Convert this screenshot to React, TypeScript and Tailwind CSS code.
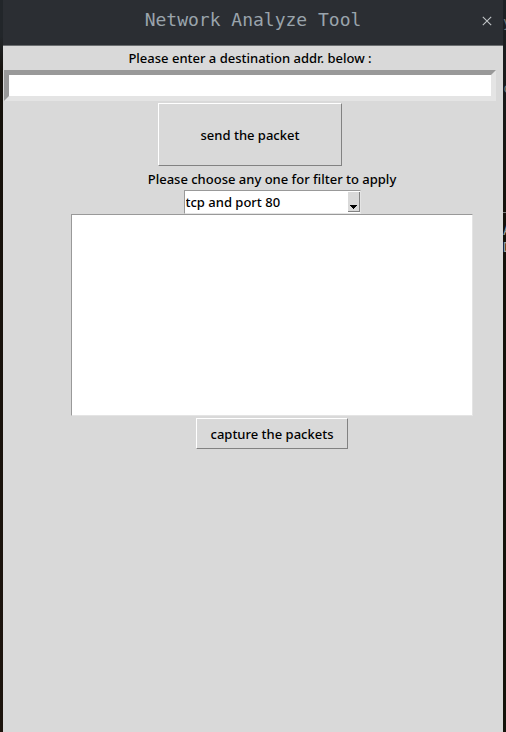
import { useState } from "react";

const filters = ["tcp and port 80", "tcp and port 443", "udp and port 53", "icmp"];

function TitleBar() {
  return (
    <header className="relative flex h-[46px] items-center justify-center border-b border-[#6b6e70] bg-[#2b2e33] pb-[6px]">
      <h1 className="font-['DejaVu_Sans_Mono','Liberation_Mono',monospace] text-[18px] leading-6 text-[#9aa4ac]">
        Network Analyze Tool
      </h1>
      <button type="button" aria-label="Close" className="absolute right-[10px] top-[15px] p-px text-[#c0c4c7]">
        <svg width="10" height="10" viewBox="0 0 10 10" fill="none" stroke="currentColor" strokeWidth="1.1">
          <path d="M0.8 0.8 9.2 9.2M9.2 0.8 0.8 9.2" />
        </svg>
      </button>
    </header>
  );
}

function DesktopEdge() {
  return (
    <div
      aria-hidden="true"
      className="relative w-[3px] shrink-0 overflow-hidden bg-gradient-to-b from-[#1d2125] via-[#15110b] via-30% to-[#15130b] font-['DejaVu_Sans_Mono',monospace] text-[14px] leading-4 text-[#777777]"
    >
      <span className="absolute left-0 top-[14px]">y</span>
      <span className="absolute left-0 top-[80px]">c</span>
      <span className="absolute left-0 top-[212px] h-px w-[3px] bg-[#777777]" />
      <span className="absolute left-0 top-[222px] text-[#a0a0a0]">A</span>
      <span className="absolute left-0 top-[239px] text-[#a0a0a0]">D</span>
    </div>
  );
}

export default function App() {
  const [address, setAddress] = useState("");
  const [filter, setFilter] = useState(filters[0]);
  const [output, setOutput] = useState("");

  return (
    <div className="flex min-h-screen bg-[#15110b] font-['Noto_Sans','Open_Sans',sans-serif] text-[13px] font-medium leading-5 text-black">
      <div className="w-[3px] shrink-0 bg-gradient-to-b from-[#22262a] from-5% via-[#15110b] via-10% to-[#1d140d]" />
      <main className="min-w-0 flex-1 bg-[#d9d9d9]">
        <TitleBar />
        <section className="flex flex-col items-center pl-px pr-[7px] pt-[2px]">
          <label htmlFor="address">Please enter a destination addr. below :</label>
          <input
            id="address"
            type="text"
            value={address}
            onChange={(e) => setAddress(e.target.value)}
            className="mt-[2px] h-[31px] w-full border-[5px] border-b-[#e4e4e4] border-l-[#999999] border-r-[#e4e4e4] border-t-[#999999] bg-white px-1 outline-none"
          />
          <button
            type="button"
            className="mt-[2px] h-[63px] w-[184px] border border-b-[#828282] border-l-white border-r-[#828282] border-t-white"
          >
            send the packet
          </button>
        </section>
        <section className="flex flex-col items-center pb-4 pl-[68px] pr-[30px] pt-[3px]">
          <label htmlFor="filter">Please choose any one for filter to apply</label>
          <div className="relative mt-px h-6 w-[177px]">
            <select
              id="filter"
              value={filter}
              onChange={(e) => setFilter(e.target.value)}
              className="h-full w-full appearance-none border border-b-[#e4e4e4] border-l-[#999999] border-r-[#e4e4e4] border-t-[#999999] bg-white pl-px outline-none"
            >
              {filters.map((name) => (
                <option key={name}>{name}</option>
              ))}
            </select>
            <span className="pointer-events-none absolute bottom-[2px] right-px top-[2px] flex w-3 items-end justify-center border-b border-r border-[#828282] bg-[#d9d9d9] pb-[2px]">
              <svg width="7" height="4" viewBox="0 0 7 4" shapeRendering="crispEdges">
                <path d="M0 0H7V1H6V2H5V3H4V4H3V3H2V2H1V1H0Z" />
              </svg>
            </span>
          </div>
          <textarea
            aria-label="Captured packets"
            value={output}
            onChange={(e) => setOutput(e.target.value)}
            className="block h-[202px] w-full resize-none border border-b-[#e4e4e4] border-l-[#999999] border-r-[#e4e4e4] border-t-[#999999] bg-white p-1 outline-none"
          />
          <button
            type="button"
            className="mt-[2px] h-[31px] w-[152px] border border-b-[#828282] border-l-white border-r-[#828282] border-t-white"
          >
            capture the packets
          </button>
        </section>
      </main>
      <DesktopEdge />
    </div>
  );
}
